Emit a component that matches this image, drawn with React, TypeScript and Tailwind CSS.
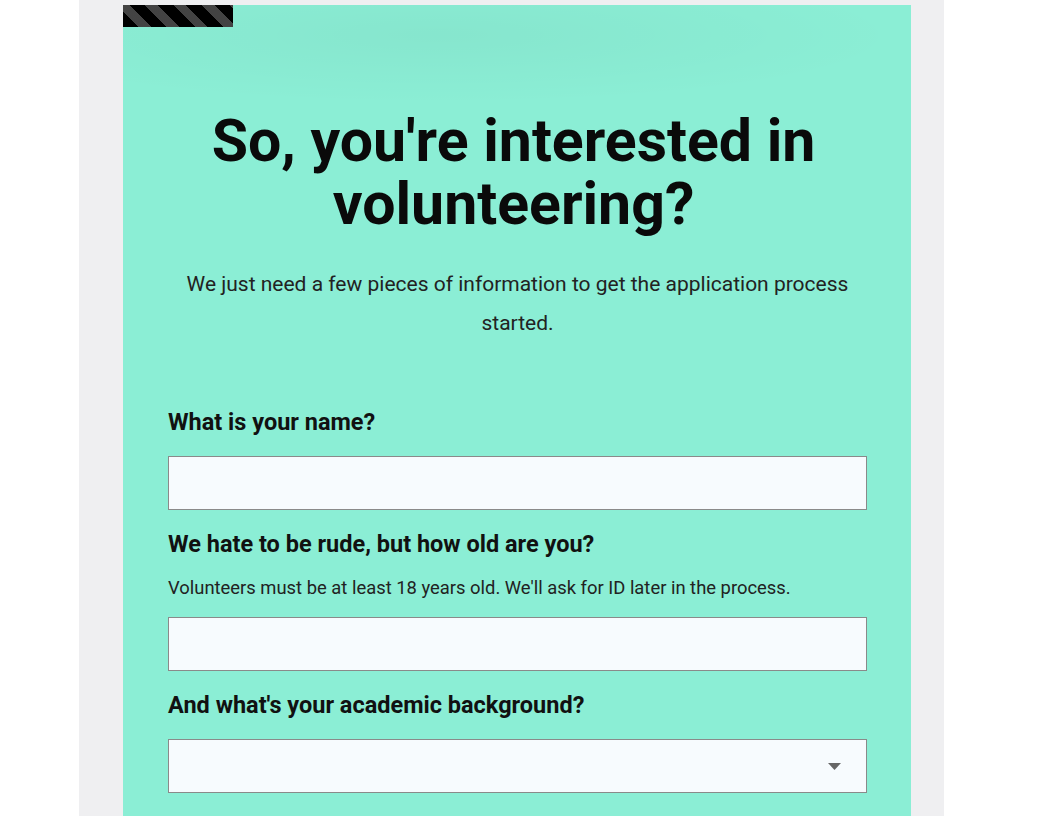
import React from 'react';

function Field({ label, help, children }: { label: string; help?: string; children: React.ReactNode }) {
  return (
    <div className="flex flex-col">
      <label className="text-[23.5px] leading-[28px] font-bold text-[#111]">{label}</label>
      {help && <p className="mt-[18px] text-[18.4px] leading-[24px] text-[#222]">{help}</p>}
      <div className={help ? 'mt-[17px]' : 'mt-[20px]'}>{children}</div>
    </div>
  );
}

export default function App() {
  return (
    <div className="min-h-screen bg-white font-['Roboto',sans-serif]">
      <div className="ml-[79px] w-[865px] min-h-[816px] bg-[#efeff1] pt-[5px] pl-[44px]">
        <div className="relative w-[788px] min-h-[811px] bg-[#8beed5] pl-[45px] pr-[44px] pb-10">
          <div className="absolute left-0 top-0 h-[22px] w-[110px] bg-[repeating-linear-gradient(45deg,#000_0px,#000_11px,#444_11px,#444_20px)]" />
          <div className="pointer-events-none absolute inset-x-0 top-0 h-[100px] bg-[radial-gradient(ellipse_at_40%_30%,rgba(0,0,0,0.035),transparent_70%)]" />

          <h1 className="relative pt-[104px] text-center text-[59px] leading-[63px] font-bold text-[#0a0a0a] pl-[14px] pr-[22px]">
            So, you're interested in volunteering?
          </h1>
          <p className="mt-[30px] text-center text-[21px] leading-[39px] text-[#222]">
            We just need a few pieces of information to get the application process started.
          </p>

          <form className="mt-[65px] flex flex-col gap-[20px]">
            <Field label="What is your name?">
              <input type="text" className="block h-[54px] w-full border border-[#8a8a8a] bg-[#f7fbfe] px-3 outline-none" />
            </Field>
            <Field
              label="We hate to be rude, but how old are you?"
              help="Volunteers must be at least 18 years old. We'll ask for ID later in the process."
            >
              <input type="text" className="block h-[54px] w-full border border-[#8a8a8a] bg-[#f7fbfe] px-3 outline-none" />
            </Field>
            <Field label="And what's your academic background?">
              <div className="relative h-[54px] w-full border border-[#8a8a8a] bg-[#f7fbfe]">
                <svg className="absolute right-[25px] top-[23px]" width="13" height="7" viewBox="0 0 13 7">
                  <path d="M0 0 L13 0 L6.5 7 Z" fill="#666" />
                </svg>
              </div>
            </Field>
          </form>
        </div>
      </div>
    </div>
  );
}
